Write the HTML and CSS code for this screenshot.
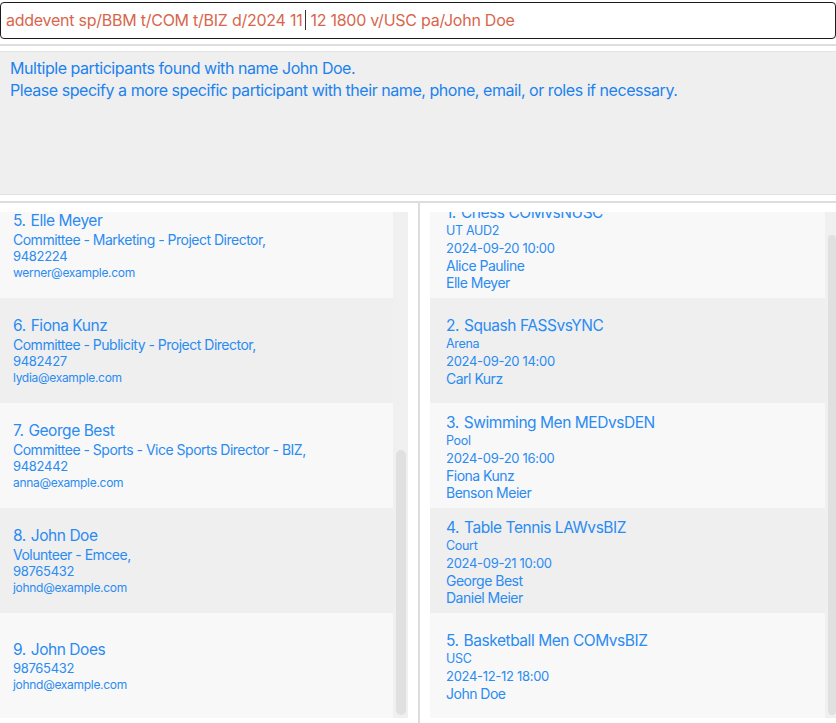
FILE: index.html
```html
<!DOCTYPE html>
<html>
<head>
<meta charset="utf-8">
<link rel="stylesheet" href="styles.css">
</head>
<body>
<div class="command">addevent sp/BBM t/COM t/BIZ d/2024 11<span class="caret"></span>12 1800 v/USC pa/John Doe</div>
<div class="sep-a"></div>
<div class="result">
  <div>Multiple participants found with name John Doe.</div>
  <div>Please specify a more specific participant with their name, phone, email, or roles if necessary.</div>
</div>
<div class="sep-b"></div>
<div class="lists">
  <div class="col col-left">
    <div class="viewport">
      <div class="cards">
        <div class="card light">
          <div class="name"><span class="idx">5.</span>Elle Meyer</div>
          <div class="roles">Committee - Marketing - Project Director,</div>
          <div class="phone">9482224</div>
          <div class="email">werner@example.com</div>
        </div>
        <div class="card dark">
          <div class="name"><span class="idx">6.</span>Fiona Kunz</div>
          <div class="roles">Committee - Publicity - Project Director,</div>
          <div class="phone">9482427</div>
          <div class="email">lydia@example.com</div>
        </div>
        <div class="card light">
          <div class="name"><span class="idx">7.</span>George Best</div>
          <div class="roles">Committee - Sports - Vice Sports Director - BIZ,</div>
          <div class="phone">9482442</div>
          <div class="email">anna@example.com</div>
        </div>
        <div class="card dark">
          <div class="name"><span class="idx">8.</span>John Doe</div>
          <div class="roles">Volunteer - Emcee,</div>
          <div class="phone">98765432</div>
          <div class="email">johnd@example.com</div>
        </div>
        <div class="card light">
          <div class="name"><span class="idx">9.</span>John Does</div>
          <div class="phone">98765432</div>
          <div class="email">johnd@example.com</div>
        </div>
      </div>
    </div>
    <div class="track track-left"><div class="thumb thumb-left"></div></div>
  </div>
  <div class="gap"></div>
  <div class="vline"></div>
  <div class="gap"></div>
  <div class="col col-right">
    <div class="viewport">
      <div class="cards ev">
        <div class="card light">
          <div class="name"><span class="idx">1.</span>Chess COMvsNUSC</div>
          <div class="venue">UT AUD2</div>
          <div class="date">2024-09-20 10:00</div>
          <div class="who">Alice Pauline</div>
          <div class="who">Elle Meyer</div>
        </div>
        <div class="card dark">
          <div class="name"><span class="idx">2.</span>Squash FASSvsYNC</div>
          <div class="venue">Arena</div>
          <div class="date">2024-09-20 14:00</div>
          <div class="who">Carl Kurz</div>
        </div>
        <div class="card light">
          <div class="name"><span class="idx">3.</span>Swimming Men MEDvsDEN</div>
          <div class="venue">Pool</div>
          <div class="date">2024-09-20 16:00</div>
          <div class="who">Fiona Kunz</div>
          <div class="who">Benson Meier</div>
        </div>
        <div class="card dark">
          <div class="name"><span class="idx">4.</span>Table Tennis LAWvsBIZ</div>
          <div class="venue">Court</div>
          <div class="date">2024-09-21 10:00</div>
          <div class="who">George Best</div>
          <div class="who">Daniel Meier</div>
        </div>
        <div class="card light">
          <div class="name"><span class="idx">5.</span>Basketball Men COMvsBIZ</div>
          <div class="venue">USC</div>
          <div class="date">2024-12-12 18:00</div>
          <div class="who">John Doe</div>
        </div>
      </div>
    </div>
    <div class="track track-right"><div class="thumb thumb-right"></div></div>
  </div>
</div>
</body>
</html>
```

FILE: styles.css
```css
* { box-sizing: border-box; }
html, body {
  margin: 0;
  padding: 0;
  background: #ffffff;
  font-family: Inter, "Noto Sans", "Liberation Sans", sans-serif;
  width: 836px;
  height: 723px;
  overflow: hidden;
}
.command {
  margin-top: 2px;
  height: 37px;
  border: 1px solid #1c1c1c;
  border-radius: 4px;
  padding-left: 5px;
  font-size: 16px;
  line-height: 35px;
  color: #d8664c;
  white-space: nowrap;
  letter-spacing: -0.25px;
}
.caret {
  display: inline-block;
  width: 1px;
  height: 20px;
  background: #333;
  vertical-align: -4px;
  margin: 0 4px 0 3px;
}
.sep-a {
  margin-top: 5px;
  height: 2px;
  background: #dedede;
}
.result {
  margin-top: 5px;
  height: 144px;
  border-top: 1px solid #e4e4e4;
  border-bottom: 1px solid #e0e0e0;
  background: #efefef;
  padding: 5px 10px;
  font-size: 16px;
  line-height: 22px;
  color: #1c82ee;
  letter-spacing: -0.45px;
}
.sep-b {
  margin-top: 6px;
  height: 2px;
  background: #dddddd;
}
.lists {
  display: flex;
  height: 520px;
}
.col {
  display: flex;
  padding-top: 9px;
  padding-bottom: 5px;
}
.col-left { width: 408px; }
.col-right { width: 406px; }
.gap { width: 10px; }
.vline { width: 2px; background: #dddddd; }
.viewport {
  flex: 1;
  overflow: hidden;
}
.cards { margin-top: -19px; }
.card {
  height: 105px;
  display: flex;
  flex-direction: column;
  justify-content: center;
  padding: 2px 13px 0;
  color: #2a8bf2;
  white-space: nowrap;
  letter-spacing: -0.3px;
}
.ev .card { padding-left: 16px; }
.light { background: #f8f8f8; }
.dark { background: #efefef; }
.name { font-size: 15.5px; line-height: 20px; letter-spacing: -0.45px; }
.idx { margin-right: 5px; }
.roles { font-size: 14px; line-height: 17px; letter-spacing: -0.5px; }
.phone { font-size: 13px; line-height: 16px; }
.email { font-size: 12px; line-height: 18px; }
.venue { font-size: 12.5px; line-height: 16px; }
.date { font-size: 13px; line-height: 18px; }
.who { font-size: 14px; line-height: 17px; letter-spacing: -0.5px; }
.track {
  background: #f0f0f0;
  display: flex;
  flex-direction: column;
}
.track-left { width: 15px; padding: 238px 2px 3px 3px; }
.track-right { width: 11px; padding: 23px 0 3px 3px; }
.thumb {
  flex: 1;
  background: #e0e0e0;
  border-radius: 5px;
}
```
